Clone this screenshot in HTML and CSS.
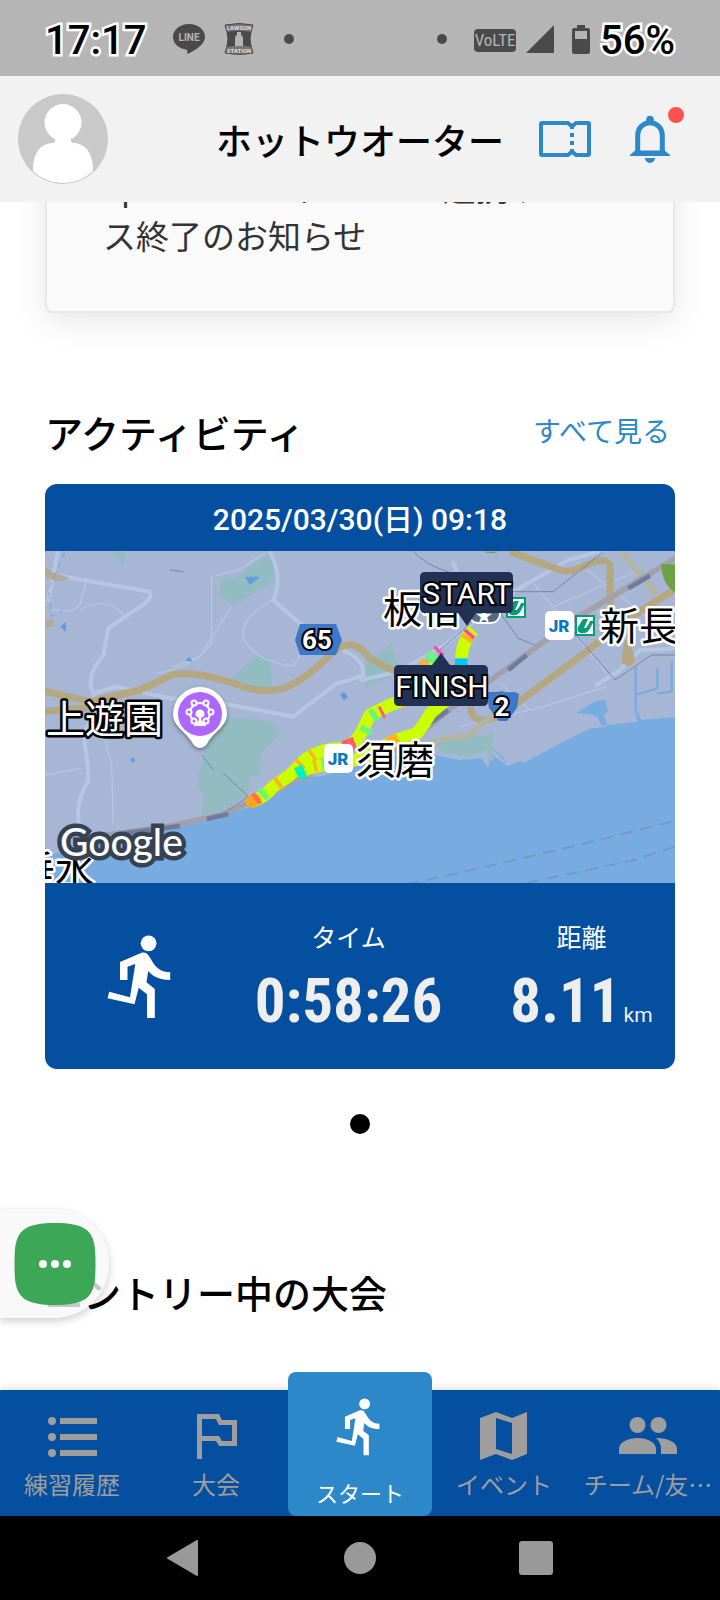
FILE: index.html
```html
<!DOCTYPE html>
<html lang="ja">
<head>
<meta charset="utf-8">
<meta name="viewport" content="width=device-width, initial-scale=1">
<title>アクティビティ</title>
<link rel="stylesheet" href="styles.css">
</head>
<body>
<svg class="sprite" aria-hidden="true">
  <symbol id="runner" viewBox="0 0 64 84">
    <circle cx="41.6" cy="8.3" r="7.9"/>
    <path d="M34.6 17.7 13 27V45h7.5V31.7l7.8-2.6L23 62.3 2.2 56.7.6 63.3l26.9 6 4.2-16.6 8.3 6.6V83h7.8V54l-8.3-6.7L41.2 36C46 42 54 45 63.2 45v-7.7C54 37 49 33 45 26l-3-5c-2-3-4-4-7.4-3.3z"/>
  </symbol>
</svg>
<div class="screen">
  <div class="status">
    <div class="status-group">
      <span class="status-text">17:17</span>
      <svg class="status-line" width="32" height="32" viewBox="0 0 32 32">
        <path fill="#4a4a4a" d="M16 1C7 1 0 6.600 0 14c0 6.500 5.500 11.500 13 12.600 1.700.3 1.500 1.400 1.200 4.400C20 28.500 32 22 32 14 32 6.600 25 1 16 1z"/>
        <text x="16" y="18" text-anchor="middle" class="line-word">LINE</text>
      </svg>
      <svg class="status-lawson" width="32" height="32" viewBox="0 0 32 32">
        <path fill="#777" stroke="#4a4a4a" d="M2 2Q16-1 30 2l-2 7q-2 7 0 14l2 7q-14 3-28 0l2-7q2-7 0-14z"/>
        <path fill="#4a4a4a" d="M4 9Q16 6 28 9q-2 7 0 15-12-3-24 0 2-8 0-15z"/>
        <path fill="#b5b5b5" d="M14 9h4v3c2 1 2 2 2 4v7h-8v-7c0-2 0-3 2-4z"/>
        <text x="16" y="7" text-anchor="middle" class="lawson-word">LAWSON</text>
        <text x="16" y="30" text-anchor="middle" class="lawson-word">STATION</text>
      </svg>
      <span class="status-dot"></span>
    </div>
    <div class="status-group">
      <span class="status-dot"></span>
      <span class="volte">VoLTE</span>
      <svg class="signal" width="28" height="28" viewBox="0 0 28 28"><path fill="#4a4a4a" d="M28 0v28H0z"/></svg>
      <svg class="battery" width="18" height="29" viewBox="0 0 18 29"><path fill="#4a4a4a" fill-rule="evenodd" d="M5 0h8v3h3a2 2 0 0 1 2 2v22a2 2 0 0 1-2 2H2a2 2 0 0 1-2-2V5a2 2 0 0 1 2-2h3zM3 6v8h12V6z"/></svg>
      <span class="status-text">56%</span>
    </div>
  </div>

  <header class="header">
    <button class="avatar" aria-label="プロフィール">
      <svg width="90" height="90" viewBox="0 0 90 90">
        <clipPath id="face"><circle cx="45" cy="45" r="44"/></clipPath>
        <circle cx="45" cy="45" r="45" fill="#c9c9c9"/>
        <g fill="#fff" clip-path="url(#face)"><circle cx="45" cy="28.500" r="18.500"/><path d="M37 42h16v5q0 2 4 2c13 2 18 13 18 27v14H15V76c0-14 5-25 18-27q4 0 4-2z"/></g>
      </svg>
    </button>
    <h1 class="user-name">ホットウオーター</h1>
    <button class="icon-button ticket" aria-label="チケット">
      <svg width="54" height="38" viewBox="0 0 54 38" fill="none" stroke="#2c88c9" stroke-width="4">
        <path stroke-linejoin="round" d="M4 3h26q4 5 8 0h12q1 0 1 1v30q0 1-1 1H38q-4-5-8 0H4q-1 0-1-1V4q0-1 1-1z"/>
        <path d="M34 5v28" stroke-dasharray="4 4"/>
      </svg>
    </button>
    <button class="icon-button bell" aria-label="通知">
      <svg width="40" height="48" viewBox="0 0 40 48" fill="#2c88c9">
        <circle cx="20" cy="4.500" r="3.800"/>
        <path d="M7.700 38V20a12.300 12.300 0 0 1 24.600 0v18" fill="none" stroke="#2c88c9" stroke-width="5"/>
        <path d="M5.200 35.500 0 40v1h40v-1l-5.200-4.500zM15 43h10a5 5 0 0 1-10 0z"/>
      </svg>
      <span class="badge"></span>
    </button>
  </header>

  <main class="content">
    <article class="notice"><p class="notice-text">Epson Viewer/Runsens連携サービ<br>ス終了のお知らせ</p></article>

    <section class="activity">
      <div class="section-head">
        <h2 class="section-title">アクティビティ</h2>
        <a class="see-all" href="#">すべて見る</a>
      </div>
      <article class="card">
        <time class="card-date" datetime="2025-03-30T09:18">2025/03/30(日) 09:18</time>
        <svg class="map" viewBox="0 0 630 332" preserveAspectRatio="xMidYMid slice" role="img" aria-label="走行ルートの地図">
          <rect width="630" height="332" fill="#a8b6d6"/>
          <g transform="translate(-5 -11) scale(.33333)" fill="none" stroke-linejoin="round">
            <path fill="#78abdf" d="M0 1040V950L120 925 300 872 480 845 620 805 690 765 760 715 850 708 960 675 1080 640 1180 645 1260 660 1325 655 1345 685 1350 640 1405 680 1390 630 1450 670 1560 610 1650 565 1685 560 1660 540 1610 520 1650 500 1700 480 1680 500 1700 555 1795 545 1795 495 1800 540 1905 532V1040z"/>
            <path fill="#a8b6d6" d="M1360 595 1405 678 1560 610 1650 565 1700 560 1670 530 1600 500 1440 560z"/>
            <path fill="#78abdf" d="M1610 520q50-40 85-40l10 35-15 10 13 28-18 6-15-35zM1325 592 1400 670l-12-20zM1785 515l20 25-12 5z"/>
            <path stroke="#78abdf" stroke-width="7" d="M1787 380v85l65-20v-60M1895 365v90l-45 5M1787 460v60"/>
            <path fill="#93bcc2" d="M470 725 500 620 545 540 600 530 690 545 725 575 665 640 660 710 635 705 620 765 560 810 485 825 490 770zM545 110l40 5 100-75 25 20-5 60-120 75-50-30zM575 415l75-70 45 5v100l-45 15zM215 35h45l-10 40zM980 350l50-15 25-30 15 60 25 30-120 50zM1180 610l180-30v80l-15 5v-35l-60 20-75-10zM1555 75l25-22 10 15zM970 340h20v60z"/>
            <g stroke="#b5c6e2" stroke-width="12" stroke-linecap="round">
              <path d="M55 30 25 180M45 105l285 50q5 20-15 35l-110 75-15 80q-50 60-35 100l15 45-40 100q15 70 15 130-45 80-25 140M690 35q40 80 10 145l85 75 130 80q55 20 55 70-50 20-80 25l-130 100-240-45-130-10-160-35-70 20"/>
              <path d="M965 420l110-25 140-80 180-145 190-110 110-30M1240 70l25 55 50 40M1800 330q60 0 105-5M1800 330l-60 60-70 45"/>
            </g>
            <g stroke="#b5c6e2" stroke-width="4">
              <path d="M30 205q60 20 90-10l20-80M120 210q90-50 140 30M515 110v200q-50 70-165 90M515 110l80-20 80-50M575 200 510 300 480 350 400 380M700 180q-100 50-90 110 20 60 110 80 60 30 65-60M15 705l110-20M195 600l20 70 5 180M1260 560l250-60 190-60M1480 130l220 270M1540 200 1800 90M1610 65l240 190M1380 430l90 80"/>
            </g>
            <g stroke="#b5a780" stroke-width="21">
              <path d="M0 450 150 485 300 450 400 403q80-10 210 37 60 20 120 5 60-20 150-110 60-50 110 20 50 30 80 40M0 515l130-10q80-35 170-55"/>
              <path d="M1410 35l150 55q25 8 50-2l60-25q50-10 40 40v120M1290 500q10 50 50 40 50-10 90-50l210-155 110-90 160-100M1765 300l-10 60q10 15 20 0l-10-35"/>
            </g>
            <path stroke="#b2b5a4" stroke-width="18" d="M1170 605l120-20 80-70M1745 35l110 135"/>
            <path stroke="#a3a0a9" stroke-width="17" d="M130 895 380 860 540 825 680 765 850 680 1080 630 1240 500 1450 350 1600 240 1905 55"/>
            <path stroke="#707b9e" stroke-width="14" d="M250 880l170-22M500 837l65-15M1165 552l60-42M1405 390l55-45M1765 145l65-38"/>
            <path stroke="#7785a8" stroke-width="3" d="M485 645l35 45M550 700l75 70-60 40M1120 35q40 40 90 55l50 20M1400 155h140l150-120M1200 330l160-140 75 105 50 20M1905 345h-70l-110 75-130-150M390 90l40 5"/>
            <path stroke="#7595c2" stroke-width="5" stroke-dasharray="38 22" d="M1895 845l-300 75-300 70-190 42M1905 920l-130 42-330 70"/>
            <path fill="#5d9de0" d="M60 260l18-15v30zM435 362l13-12 10 15zM900 465l12-10 12 15-12 12zM615 110h45l-30 25zM272 655l12 0v12h-10z"/>
            <path fill="#b2a996" d="M15 80l20 15 55 20-40 10-35-15zM15 240h25v20H15z"/>
            <path stroke="#5d9de0" stroke-width="2" stroke-dasharray="20 13" d="M75 35 25 150 35 230 70 210"/>
            <path fill="#6ba245" d="M1330 35h45l-12 4h-20zM1864 73h45v88q-45-30-45-88z"/>
          </g>
          <g class="route" transform="translate(-5 -11) scale(.33333)">
            <path stroke="#cbff00" d="M780 695q60-25 120-22l70-20 90-50 70-22 20-26 22-36 40-34M1300 270q-40 40-35 105"/>
            <path stroke="#cbff00" d="M635 785q35-10 65-45l50-35 50-50q50-30 100-30 40-10 60-40l30-60 50-25 60-25 60-60 40-60"/>
            <path stroke="#ffa51c" stroke-linecap="round" d="M636 784l8-5"/>
            <path stroke="#ff704d" d="M645 780l10-8"/>
            <path stroke="#66f67d" d="M664 766l12-10M975 578l8-14M1168 362l18-18M995 530l14-9M846 676l12-2"/>
            <path stroke="#ffb31d" d="M710 732l10-7M776 676l8-8M812 646l8-6M820 677l10-2M1045 612l30-16M1080 488l22-10M1150 380l12-12M1278 300l8-12"/>
            <path stroke="#00f3bd" d="M770 702l24-10"/>
            <path stroke="#ff5e71" d="M910 622l35-14M1022 519l8-4"/>
            <path stroke="#ff4b9d" d="M1193 337l7-7M1285 286l7-8"/>
            <path stroke="#00c8ff" d="M1264 355v20"/>
          </g>

          <path d="M255 73h36l6 16-6 15h-36l-5-15z" fill="#3c78c8"/>
          <text class="shield" x="272" y="98">65</text>
          <path d="M444 141q12 0 13-1 2 2 13 1l4 2-2 14-10 13h-8l-10-13-2-14z" fill="#3c78c8"/>
          <text class="shield" x="457" y="165">2</text>

          <text class="place" x="338" y="72">板宿</text>
          <rect x="424" y="54" width="31" height="18" rx="9" fill="#536a85" stroke="#fff" stroke-width="2"/>
          <text class="star" x="439" y="71">★</text>
          <g id="subway-a"><rect x="461" y="46" width="20" height="21" fill="#079d72"/><rect x="463" y="48" width="16" height="17" fill="#fff"/><path d="M469 50h5l-4 9q3 1 6-7h4l-5 9q-3 4-8 3-5-1-3-6z" fill="#079d72"/></g>
          <use href="#subway-a" x="69" y="18"/>
          <rect x="500" y="60" width="29" height="29" rx="5" fill="#fff"/>
          <text class="jr" x="514" y="81">JR</text>
          <text class="place" x="555" y="89">新長</text>
          <text class="place inverse" x="1" y="182">上遊園</text>
          <text class="place" x="311" y="223">須磨</text>
          <rect x="279" y="193" width="29" height="29" rx="5" fill="#fff"/>
          <text class="jr" x="293" y="214">JR</text>
          <text class="place" x="-29" y="333">垂水</text>

          <path class="pin" d="M155 136a27 27 0 0 1 27 27c0 13-14 18-20 30q-7 8-14 0c-6-12-20-17-20-30a27 27 0 0 1 27-27z"/>
          <circle cx="155" cy="163" r="22" fill="#ae66ff"/>
          <g fill="none" stroke="#fff" stroke-width="2"><circle cx="155" cy="162" r="10"/><g fill="#ae66ff"><circle cx="149" cy="152" r="2.500"/><circle cx="161" cy="152" r="2.500"/><circle cx="144" cy="161" r="2.500"/><circle cx="166" cy="161" r="2.500"/><circle cx="149" cy="170" r="2.500"/><circle cx="161" cy="170" r="2.500"/></g></g>
          <path fill="#fff" d="M151 165a4.500 4.500 0 1 1 8 0l-3 2 1 5h4v3h-12v-3h4l1-5z"/>

          <path fill="#213154" d="M380 21h83q5 0 5 5v31q0 5-5 5h-32l-9 13-9-13h-33q-5 0-5-5V26q0-5 5-5zM354 114h33l9-12 9 12h33q5 0 5 5v31q0 5-5 5h-84q-5 0-5-5v-31q0-5 5-5z"/>
          <text class="marker" x="422" y="53">START</text>
          <text class="marker" x="397" y="146">FINISH</text>
          <text class="google" x="15" y="305">Google</text>
        </svg>
        <div class="stats">
          <svg class="stat-icon"><use href="#runner"/></svg>
          <dl class="stat"><dt>タイム</dt><dd>0:58:26</dd></dl>
          <dl class="stat distance"><dt>距離</dt><dd>8.11<span class="unit">km</span></dd></dl>
        </div>
      </article>
      <span class="pager"></span>
    </section>

    <section class="entries"><h2 class="section-title">エントリー中の大会</h2></section>
    <div class="assist">
      <button class="assist-button" aria-label="メニュー">
        <svg width="82" height="82" viewBox="0 0 82 82"><path fill="#3ca857" d="M41 0c29 0 38 7 40 26q1 15 0 30c-2 19-11 26-40 26S3 75 1 56q-1-15 0-30C3 7 12 0 41 0z"/><g fill="#fff"><circle cx="29" cy="41" r="4"/><circle cx="41" cy="41" r="4"/><circle cx="53" cy="41" r="4"/></g></svg>
      </button>
    </div>
  </main>

  <nav class="tabs">
    <a class="tab" href="#"><svg class="tab-icon" viewBox="0 0 50 48"><path d="M13 6h37v6H13zM13 22h37v6H13zM13 38h37v6H13z"/><circle cx="5" cy="9" r="4"/><circle cx="5" cy="25" r="4"/><circle cx="5" cy="41" r="4"/></svg><span class="tab-label">練習履歴</span></a>
    <a class="tab" href="#"><svg class="tab-icon" viewBox="0 0 50 48"><path fill-rule="evenodd" d="M6 2h22l3 6h15v26H28l-3-5H11v18H6zm5 5v17h17l3 5h10V13H28l-3-6z"/></svg><span class="tab-label">大会</span></a>
    <a class="tab active" href="#" aria-current="page"><svg class="run-icon"><use href="#runner"/></svg><span class="tab-label">スタート</span></a>
    <a class="tab" href="#"><svg class="tab-icon" viewBox="0 0 50 48"><path fill-rule="evenodd" d="M1 6 17 0l16 6L48 0v42l-15 6-16-6-16 6zm16 0v31l16 5V11z"/></svg><span class="tab-label">イベント</span></a>
    <a class="tab" href="#"><svg class="tab-icon wide" viewBox="0 0 58 48"><circle cx="18.500" cy="13" r="8"/><circle cx="39.500" cy="13" r="8"/><path d="M0 42v-5c0-7 9-11 18.500-11S37 30 37 37v5zM42 42v-6c0-4-2-7-5-10 12 0 21 4 21 11v5z"/></svg><span class="tab-label">チーム/友…</span></a>
  </nav>
  <div class="system">
    <button class="system-button" aria-label="戻る"><svg width="34" height="36" viewBox="0 0 34 36"><path d="M30 1v34L1 18z" stroke="#999" stroke-width="2" stroke-linejoin="round"/></svg></button>
    <button class="system-button" aria-label="ホーム"><svg width="34" height="36" viewBox="0 0 34 36"><circle cx="17" cy="18" r="16"/></svg></button>
    <button class="system-button" aria-label="履歴"><svg width="34" height="36" viewBox="0 0 34 36"><rect y="1" width="34" height="34" rx="3"/></svg></button>
  </div>
</div>
</body>
</html>
```
FILE: styles.css
```css
* { box-sizing: border-box; }
body {
  margin: 0;
  background: #fff;
  color: #000;
  font-family: Roboto, "Noto Sans CJK JP", sans-serif;
}
h1, h2, p, dl, dd { margin: 0; }
button { padding: 0; border: 0; background: none; }
svg { display: block; }
a { text-decoration: none; }
.sprite { position: absolute; width: 0; height: 0; }
.screen { min-height: 100vh; display: flex; flex-direction: column; overflow: hidden; }

.status {
  height: 76px;
  padding: 2px 45px 0;
  display: flex;
  align-items: center;
  justify-content: space-between;
  background: #b5b5b5;
}
.status-group { display: flex; align-items: center; }
.status-text {
  padding-top: 2px;
  font-size: 40px;
  font-weight: 500;
  -webkit-text-stroke: 5px #fff;
  paint-order: stroke fill;
}
.status-line { margin-left: 27px; }
.status-lawson { margin-left: 18px; }
.line-word { font-size: 10px; font-weight: 700; fill: #b5b5b5; }
.lawson-word { font-size: 6px; font-weight: 700; fill: #ddd; }
.status-dot { width: 10px; height: 10px; border-radius: 50%; background: #4a4a4a; margin-left: 29px; }
.volte {
  width: 42px;
  margin: 2px 10px 0 27px;
  border-radius: 4px;
  background: #4a4a4a;
  color: #b5b5b5;
  font-family: "Roboto Condensed", Roboto, sans-serif;
  font-size: 17px;
  line-height: 23px;
  text-align: center;
}
.battery { margin: 0 10px 0 18px; }

.header {
  position: relative;
  z-index: 2;
  height: 126px;
  padding: 0 50px 0 18px;
  display: flex;
  align-items: center;
  background: #f2f2f2;
}
.user-name { margin-left: auto; padding-top: 8px; font-size: 36px; font-weight: 500; line-height: 54px; }
.icon-button { position: relative; }
.ticket { margin-left: 34px; }
.bell { margin-left: 38px; }
.badge {
  position: absolute;
  top: -8px;
  right: -14px;
  width: 16px;
  height: 16px;
  border-radius: 50%;
  background: #fb514f;
}

.content { position: relative; flex: 1; padding: 0 45px; }
.notice {
  margin-top: -60px;
  padding: 24px 56px 49px;
  border: 2px solid #e8e8e8;
  border-top: 0;
  border-radius: 8px;
  background: #fafafa;
  box-shadow: 0 8px 32px rgba(0, 0, 0, .1);
}
.notice-text { font-size: 33px; line-height: 48px; color: #333; white-space: nowrap; }
.section-head { display: flex; align-items: center; justify-content: space-between; }
.section-title { font-size: 38px; font-weight: 500; line-height: 56px; }
.activity { margin-top: 94px; }
.see-all { padding: 0 5px 4px 0; color: #2c88c9; font-size: 28px; line-height: 40px; }
.card { margin-top: 21px; border-radius: 12px; overflow: hidden; background: #044f9f; color: #fff; }
.card-date { display: block; padding-top: 4px; height: 67px; font-size: 30px; font-weight: 500; line-height: 64px; text-align: center; }
.map { width: 100%; }
.route { fill: none; stroke-width: 38px; stroke-linejoin: round; }
.place { font-size: 39px; font-weight: 400; fill: #000; stroke: #fff; stroke-width: 5px; paint-order: stroke; stroke-linejoin: round; }
.inverse { fill: #fff; stroke: #000; }
.shield { font-size: 26px; font-weight: 700; text-anchor: middle; fill: #fff; stroke: #000; stroke-width: 4px; paint-order: stroke; }
.marker { font-size: 30px; text-anchor: middle; fill: #fff; stroke: #000; stroke-width: 4px; paint-order: stroke; }
.jr { font-size: 17px; font-weight: 900; text-anchor: middle; fill: #0878bf; }
.star { font-size: 17px; text-anchor: middle; fill: #fff; }
.pin { fill: #fff; filter: drop-shadow(0 2px 2px rgba(0, 0, 0, .4)); }
.google { font-family: Lato, sans-serif; font-size: 39px; font-weight: 500; fill: #fff; stroke: #364252; stroke-width: 9px; paint-order: stroke; }

.stats { height: 186px; display: grid; grid-template-columns: 190px 227px 1fr; }
.stat-icon { width: 64px; height: 84px; margin: 52px 0 0 62px; fill: #fff; }
.stat { padding-top: 38px; text-align: center; white-space: nowrap; }
.distance { padding-left: 26px; }
.stat dt { font-size: 25px; line-height: 36px; }
.stat dd { color: #eee; font-family: "Roboto Condensed", "Liberation Sans Narrow", Roboto, sans-serif; font-size: 61px; font-weight: 700; line-height: 88px; }
.unit { margin-left: 3px; font-family: Roboto, sans-serif; font-size: 21px; font-weight: 400; }
.pager { display: block; width: 20px; height: 20px; margin: 45px auto 0; border-radius: 50%; background: #000; }
.entries { margin-top: 133px; }
.assist {
  position: absolute;
  left: 0;
  bottom: 72px;
  width: 109px;
  height: 109px;
  padding: 14px;
  border-radius: 0 55px 55px 0;
  background: rgba(247, 247, 247, .8);
  box-shadow: 0 3px 8px rgba(0, 0, 0, .2);
}

.tabs {
  position: relative;
  height: 126px;
  display: grid;
  grid-template-columns: repeat(5, minmax(0, 1fr));
  grid-template-rows: 126px;
  align-items: end;
  background: #044f9f;
  box-shadow: 0 -2px 8px rgba(0, 0, 0, .12);
}
.tab {
  height: 126px;
  padding-top: 22px;
  display: flex;
  flex-direction: column;
  align-items: center;
  color: #9e9e9e;
  fill: #9e9e9e;
}
.tab-icon { width: 50px; height: 48px; }
.wide { width: 58px; }
.tab-label { margin-top: 6px; white-space: nowrap; font-family: "Noto Sans CJK JP", sans-serif; font-size: 24px; font-weight: 400; line-height: 36px; }
.active { height: 144px; padding-top: 26px; border-radius: 8px; background: #2c88c9; color: #fff; fill: #fff; }
.active .tab-label { margin-top: 18px; font-size: 22px; }
.run-icon { width: 44px; height: 58px; margin-right: 4px; }
.system { height: 84px; padding: 0 96px; display: grid; grid-template-columns: repeat(3, 1fr); justify-items: center; align-items: center; background: #000; fill: #999; }
```
